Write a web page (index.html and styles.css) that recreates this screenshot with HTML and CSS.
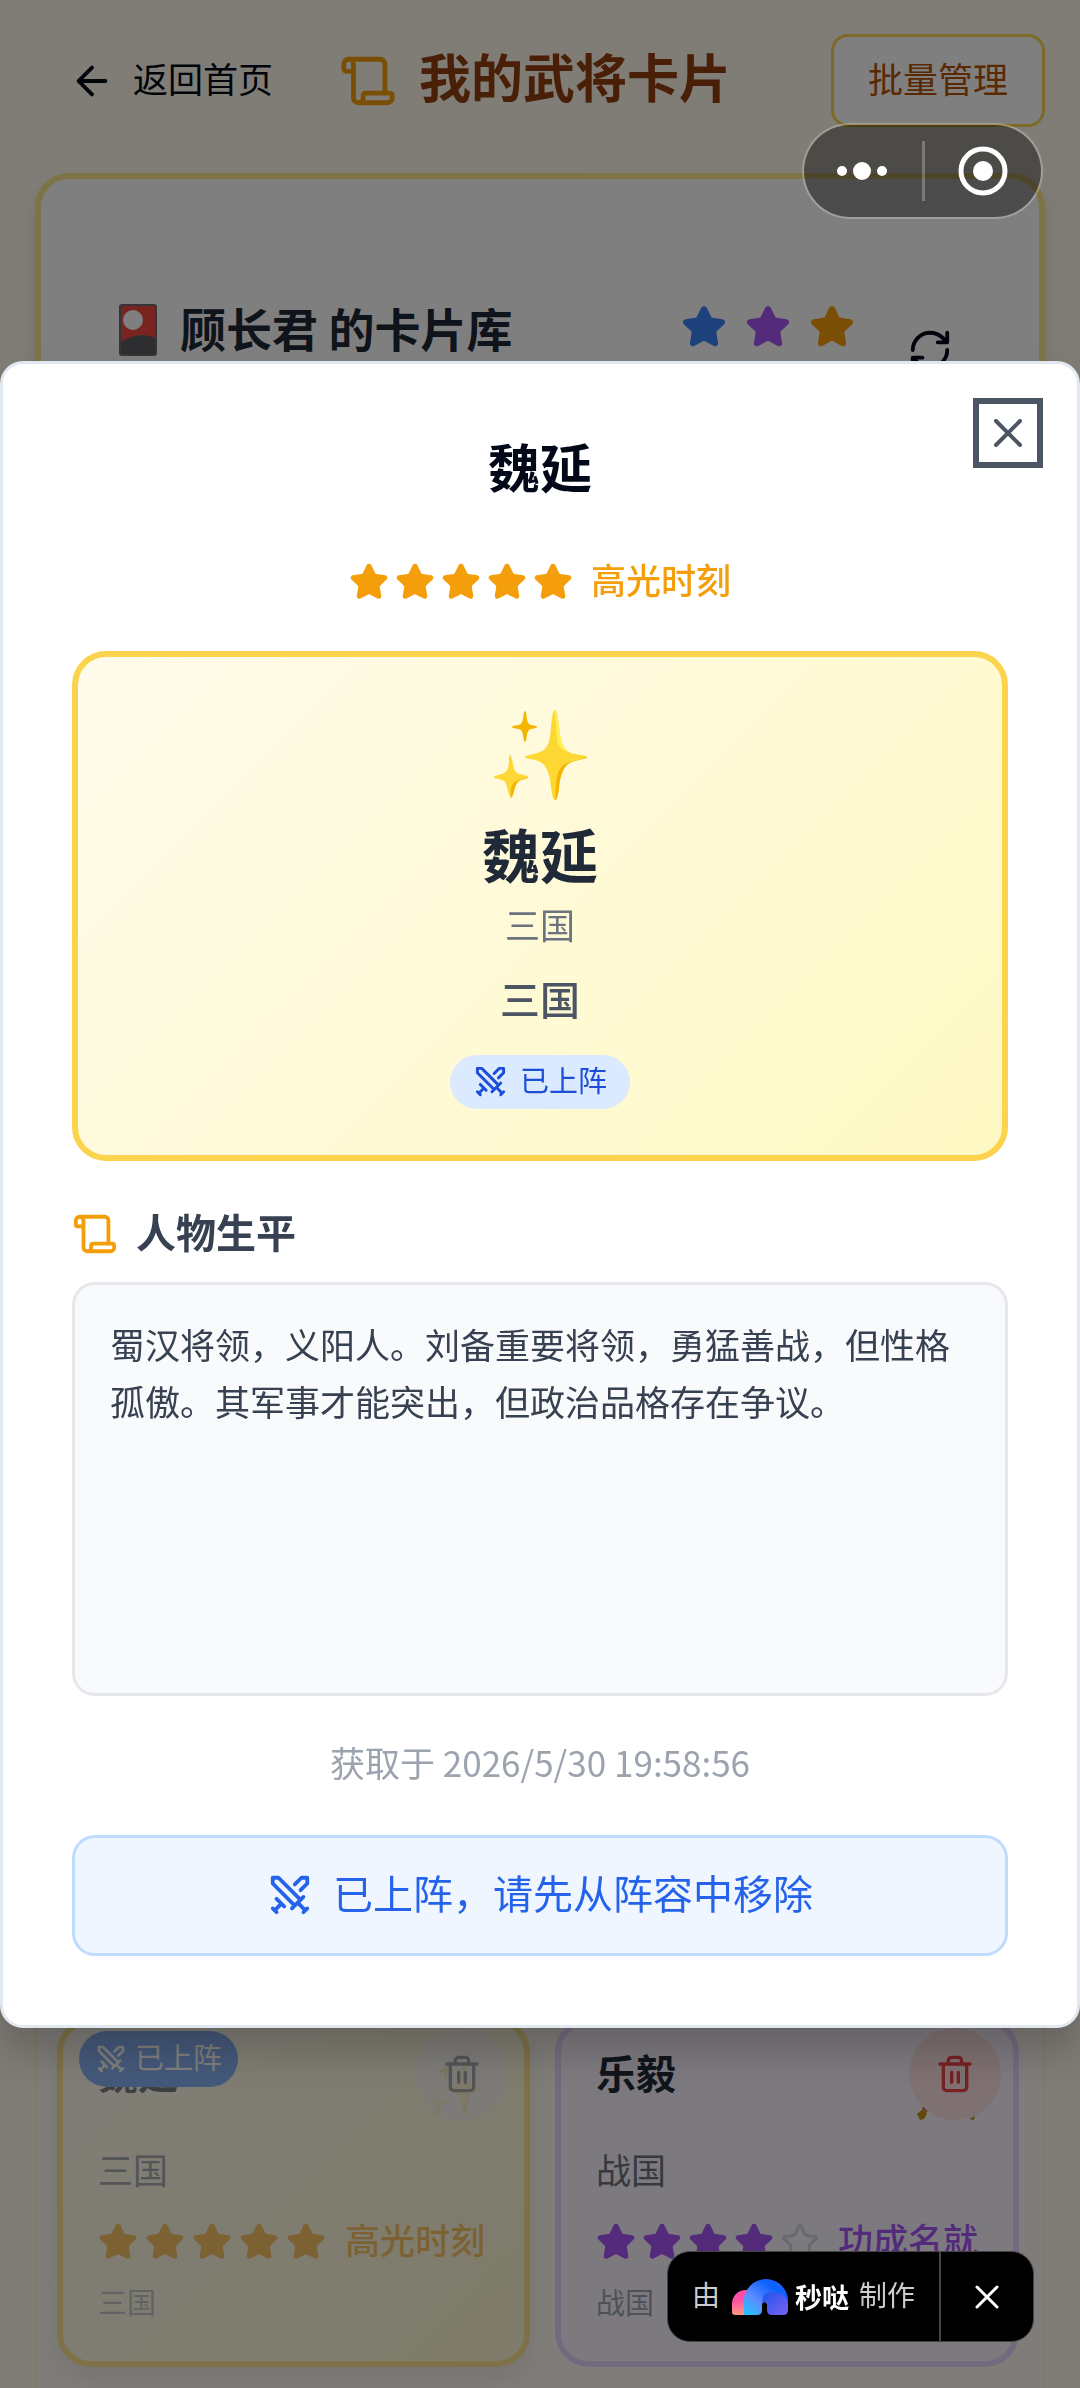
FILE: index.html
```html
<!DOCTYPE html>
<html lang="zh-CN">
<head>
<meta charset="utf-8">
<meta name="viewport" content="width=device-width, initial-scale=1">
<title>我的武将卡片</title>
<link rel="stylesheet" href="styles.css">
</head>
<body>
<svg class="defs" aria-hidden="true">
  <symbol id="star" viewBox="0 0 24 24"><path d="M11.525 2.295a.53.53 0 0 1 .95 0l2.31 4.679a2.123 2.123 0 0 0 1.595 1.16l5.166.756a.53.53 0 0 1 .294.904l-3.736 3.638a2.123 2.123 0 0 0-.611 1.878l.882 5.14a.53.53 0 0 1-.771.56l-4.618-2.428a2.122 2.122 0 0 0-1.973 0L6.396 21.01a.53.53 0 0 1-.77-.56l.881-5.139a2.122 2.122 0 0 0-.611-1.879L2.16 9.795a.53.53 0 0 1 .294-.906l5.165-.755a2.122 2.122 0 0 0 1.597-1.16z"/></symbol>
  <symbol id="swords" viewBox="0 0 24 24"><path d="M14.5 17.5 3 6V3h3l11.5 11.5M13 19l6-6M16 16l4 4M19 21l2-2M14.5 6.5 18 3h3v3l-3.5 3.5M5 14l4 4M7 17l-3 3M3 19l2 2"/></symbol>
  <symbol id="scroll" viewBox="0 0 24 24"><path d="M19 17V5a2 2 0 0 0-2-2H4"/><path d="M8 21h12a2 2 0 0 0 2-2v-1a1 1 0 0 0-1-1H11a1 1 0 0 0-1 1v1a2 2 0 1 1-4 0V5a2 2 0 1 0-4 0v2a1 1 0 0 0 1 1h3"/></symbol>
  <symbol id="trash" viewBox="0 0 24 24"><path d="M3 6h18M19 6v14a2 2 0 0 1-2 2H7a2 2 0 0 1-2-2V6M8 6V4a2 2 0 0 1 2-2h4a2 2 0 0 1 2 2v2M10 11v6M14 11v6"/></symbol>
  <symbol id="sparkles" viewBox="0 0 96 92">
    <path fill="#fdd835" d="M63 1c2 0 3 7 4 17 2 16 4 22 10 25 5 3 18 3 18 5s-13 3-19 7c-6 5-8 14-9 24-1 8-2 12-4 12s-3-5-4-13c-1-10-3-19-9-24-5-4-17-4-17-6s12-3 17-6c6-3 8-10 9-24 1-10 2-17 4-17z"/>
    <path fill="#ffee58" d="M63 1c2 0 3 7 4 17 2 16 4 22 10 25-6-1-11-4-12-12-1-9-1-20-2-30z"/>
    <path fill="#f4b400" d="M95 48c0 2-13 3-19 7-6 5-8 14-9 24-1 8-2 12-4 12 1-9 0-17 3-27 4-12 17-11 29-16z"/>
    <path fill="#fdd835" d="M18 46c1 0 2 4 3 9 1 6 2 8 6 10 3 1 9 1 9 3s-6 2-9 4c-5 3-5 15-8 17-3-1-3-14-7-17-3-2-10-2-10-4s7-2 10-4c4-2 4-6 5-10 0-5 0-8 1-8z"/>
    <path fill="#f4b400" d="M36 68c0 2-6 2-9 4-5 3-5 15-8 17 0-6-1-10 2-14 3-5 9-4 15-7z"/>
    <path fill="#f4b400" d="M33 2c2 0 1 11 4 13 2 2 8 1 8 3s-6 1-8 3c-3 3-2 12-4 12s-1-9-4-12c-2-2-9-1-9-3s7-1 9-3c3-3 2-13 4-13z"/>
  </symbol>
</svg>

<div class="page">
  <header class="topbar">
    <a class="back" href="#">
      <svg class="icon icon-md" viewBox="0 0 24 24"><path d="m12 19-7-7 7-7M19 12H5"/></svg>
      <span class="label">返回首页</span>
    </a>
    <h1 class="page-title"><svg class="icon icon-lg amber"><use href="#scroll"/></svg><span class="label">我的武将卡片</span></h1>
    <button class="manage" type="button"><span class="label">批量管理</span></button>
  </header>

  <section class="library">
    <h2 class="library-title">
      <svg class="flower-card" viewBox="0 0 38 52" aria-hidden="true">
        <rect width="38" height="52" rx="3" fill="#6b6b6e"/>
        <path d="M2 2h34v32c-11-5-23-3-34 4z" fill="#f4483f"/>
        <path d="M2 38c11-7 23-9 34-4v16H2z" fill="#5c5c60"/>
        <circle cx="14" cy="16" r="10" fill="#fff"/>
      </svg>
      <span class="label">顾长君 的卡片库</span>
    </h2>
    <div class="totals">
      <svg class="star icon-md blue"><use href="#star"/></svg>
      <svg class="star icon-md purple"><use href="#star"/></svg>
      <svg class="star icon-md amber"><use href="#star"/></svg>
    </div>
    <button class="refresh" type="button" aria-label="刷新">
      <svg class="icon icon-md" viewBox="0 0 24 24"><path d="M3 12a9 9 0 0 1 9-9 9.750 9.750 0 0 1 6.740 2.740L21 8M21 3v5h-5M21 12a9 9 0 0 1-9 9 9.750 9.750 0 0 1-6.740-2.740L3 16M8 16H3v5"/></svg>
    </button>
  </section>

  <section class="collection">
    <article class="card gold deployed">
      <h3>魏延</h3>
      <p class="era">三国</p>
      <div class="rating amber">
        <svg class="star"><use href="#star"/></svg><svg class="star"><use href="#star"/></svg><svg class="star"><use href="#star"/></svg><svg class="star"><use href="#star"/></svg><svg class="star"><use href="#star"/></svg>
        <span class="label">高光时刻</span>
      </div>
      <p class="faction">三国</p>
      <svg class="card-emoji"><use href="#sparkles"/></svg>
      <button class="delete" type="button" disabled aria-label="删除"><svg class="icon"><use href="#trash"/></svg></button>
      <span class="deployed-tag"><svg class="icon"><use href="#swords"/></svg><span class="label">已上阵</span></span>
    </article>
    <article class="card violet">
      <h3>乐毅</h3>
      <p class="era">战国</p>
      <div class="rating purple">
        <svg class="star"><use href="#star"/></svg><svg class="star"><use href="#star"/></svg><svg class="star"><use href="#star"/></svg><svg class="star"><use href="#star"/></svg><svg class="star empty"><use href="#star"/></svg>
        <span class="label">功成名就</span>
      </div>
      <p class="faction">战国</p>
      <svg class="card-emoji" viewBox="0 0 58 56"><path d="m0 50 6-5 4 4-3 6-4 1z" fill="#c89410"/><path d="m5 44 3-4 4 3-2 5z" fill="#a84b2a"/><path d="m52 55 6-3-1 4z" fill="#c89410"/></svg>
      <button class="delete" type="button" aria-label="删除"><svg class="icon"><use href="#trash"/></svg></button>
    </article>
  </section>
</div>

<div class="overlay">
  <div class="modal" role="dialog" aria-modal="true" aria-labelledby="modal-title">
    <button class="close" type="button" aria-label="关闭"><svg viewBox="0 0 28 28"><path d="m2 2 24 24M26 2 2 26"/></svg></button>
    <h2 class="modal-title" id="modal-title">魏延</h2>
    <div class="rating modal-rating amber">
      <svg class="star"><use href="#star"/></svg><svg class="star"><use href="#star"/></svg><svg class="star"><use href="#star"/></svg><svg class="star"><use href="#star"/></svg><svg class="star"><use href="#star"/></svg>
      <span class="label">高光时刻</span>
    </div>
    <div class="hero">
      <svg class="hero-emoji"><use href="#sparkles"/></svg>
      <h3 class="hero-name">魏延</h3>
      <p class="hero-era">三国</p>
      <p class="hero-faction">三国</p>
      <span class="badge"><svg class="icon"><use href="#swords"/></svg><span class="label">已上阵</span></span>
    </div>
    <h3 class="bio-title"><svg class="icon icon-md amber"><use href="#scroll"/></svg><span class="label">人物生平</span></h3>
    <p class="bio">蜀汉将领，义阳人。刘备重要将领，勇猛善战，但性格孤傲。其军事才能突出，但政治品格存在争议。</p>
    <p class="obtained">获取于 2026/5/30 19:58:56</p>
    <div class="notice"><svg class="icon icon-md"><use href="#swords"/></svg><span class="label">已上阵，请先从阵容中移除</span></div>
  </div>
</div>

<div class="capsule">
  <button class="more" type="button" aria-label="更多"><svg width="52" height="20" viewBox="0 0 52 20"><circle cx="6" cy="10" r="5"/><circle cx="26" cy="10" r="9"/><circle cx="46" cy="10" r="5"/></svg></button>
  <button class="exit" type="button" aria-label="退出"><svg width="50" height="50" viewBox="0 0 50 50"><circle cx="25" cy="25" r="22" fill="none" stroke="#fff" stroke-width="5"/><circle cx="25" cy="25" r="10"/></svg></button>
</div>

<div class="made-with">
  <a class="made-link" href="#"><span class="label">由</span>
    <svg class="brand" viewBox="0 0 56 36" aria-hidden="true">
      <defs>
        <linearGradient id="pink" x1="0" y1="0" x2="0" y2="1"><stop offset=".4" stop-color="#ff4fa8"/><stop offset="1" stop-color="#ff9a80"/></linearGradient>
        <linearGradient id="arch" x1="0" y1="1" x2="1" y2="0"><stop offset="0" stop-color="#22c8ff"/><stop offset=".35" stop-color="#5b8cff"/><stop offset=".7" stop-color="#0b62ff"/><stop offset="1" stop-color="#2a5cff"/></linearGradient>
        <linearGradient id="leg" x1="0" y1="0" x2="1" y2="1"><stop offset="0" stop-color="#1f54e8"/><stop offset="1" stop-color="#7a62f5"/></linearGradient>
      </defs>
      <path fill="url(#pink)" d="M0 33V25c0-8 6-14 14-14h4v25H3q-3 0-3-3z"/>
      <path fill="url(#arch)" d="M12 36V22a22 22 0 0 1 44 0v4H36l-3-3q-3 0-3 3v5q0 5-5 5z"/>
      <path fill="url(#leg)" d="M31 17q4-4 10-4c8 0 15 5 15 13v5q0 5-5 5H40q-5 0-5-5v-5q0-3-2-3-3 0-3 3z"/>
    </svg>
    <strong>秒哒</strong>
    <span class="label">制作</span>
  </a>
  <button class="made-close" type="button" aria-label="关闭"><svg width="24" height="24" viewBox="0 0 24 24"><path d="m2 2 20 20M22 2 2 22"/></svg></button>
</div>
</body>
</html>
```

FILE: styles.css
```css
* { box-sizing: border-box; }

body {
  margin: 0;
  overflow: hidden;
  font-family: "Noto Sans CJK SC", "Noto Sans", sans-serif;
  font-size: 35px;
  line-height: 48px;
  color: #020817;
}

h1, h2, h3, p { margin: 0; }
svg { display: block; flex: none; }
button { margin: 0; padding: 0; border: 0; background: none; font: inherit; color: inherit; }
a { color: inherit; text-decoration: none; }

.defs { position: absolute; width: 0; height: 0; }

.icon { fill: none; stroke: currentColor; stroke-width: 2; stroke-linecap: round; stroke-linejoin: round; }
.star { width: 40px; height: 40px; fill: currentColor; stroke: currentColor; stroke-width: 2; stroke-linejoin: round; }
.icon-md { width: 46px; height: 46px; }
.icon-lg { width: 58px; height: 58px; }
.amber { color: #f59e0b; }
.blue { color: #3b82f6; }
.purple { color: #a855f7; }

/* Lifts the low-sitting CJK glyphs to the middle of the icon beside them */
.label { display: block; padding-bottom: 6px; }

/* Page */
.page {
  display: flex;
  flex-direction: column;
  min-height: 100vh;
  padding: 34px 35px 0;
  background: linear-gradient(135deg, #fffbeb, #fff7ed);
}

.topbar { display: flex; align-items: center; margin-bottom: 46px; }
.back { display: flex; align-items: center; gap: 18px; padding-left: 34px; }
.page-title {
  display: flex;
  align-items: center;
  gap: 22px;
  margin-left: 66px;
  font-size: 52px;
  line-height: 70px;
  font-weight: 700;
  color: #92400e;
}
.page-title .label { padding-bottom: 10px; }
.page-title .icon { color: #f59e0b; }
.manage {
  height: 93px;
  margin-left: auto;
  padding: 0 34px;
  border: 3px solid #fcd34d;
  border-radius: 17px;
  background: #fff;
  color: #b45309;
}

.library {
  display: flex;
  align-items: flex-start;
  padding: 125px 86px 46px 78px;
  border: 6px solid #fde68a;
  border-radius: 34px;
  background: #fff;
  box-shadow: 0 12px 18px rgba(0, 0, 0, .1);
}
.library-title {
  display: flex;
  align-items: center;
  gap: 23px;
  font-size: 46px;
  line-height: 46px;
  font-weight: 700;
  color: #1f2937;
}
.flower-card { width: 38px; height: 52px; }
.totals { display: flex; gap: 18px; margin-left: auto; }
.refresh { height: 92px; margin-left: 52px; }

.collection {
  flex: 1;
  display: grid;
  grid-template-columns: 474fr 464fr;
  gap: 25px;
  align-items: end;
  margin-top: 69px;
  padding: 0 24px 21px 20px;
  border: 2px solid #fef3c7;
  border-bottom: 0;
  border-radius: 34px 34px 0 0;
  background: rgba(255, 255, 255, .3);
}
.card {
  position: relative;
  padding: 21px 35px 40px;
  border: 6px solid;
  border-radius: 34px;
}
.card.gold {
  border-color: #fcd34d;
  background: linear-gradient(135deg, #fffbeb, #fef9c3);
  box-shadow: 0 12px 18px rgba(0, 0, 0, .1);
}
.card.violet { border-color: #e9d5ff; background: #faf5ff; }
.card.deployed { opacity: .6; }
.card h3 { margin-bottom: 46px; font-size: 40px; line-height: 54px; font-weight: 700; color: #1f2937; }
.era { margin-bottom: 26px; color: #6b7280; }
.faction { margin-top: 16px; font-size: 29px; line-height: 40px; color: #9ca3af; }

.rating { display: flex; align-items: center; gap: 6px; height: 46px; font-weight: 500; white-space: nowrap; }
.rating .label { margin-left: 12px; }
.gold .rating { gap: 7px; }
.star.empty { fill: none; color: #d1d5db; }

.card-emoji { position: absolute; top: 36px; right: 40px; width: 58px; height: 56px; }
.violet .card-emoji { top: 40px; right: 38px; }
.delete {
  position: absolute;
  top: 4px;
  right: 12px;
  display: grid;
  place-items: center;
  width: 92px;
  height: 92px;
  border-radius: 50%;
  background: #fee2e2;
  color: #ef4444;
}
.delete:disabled { right: 16px; background: rgba(243, 244, 246, .7); color: #6b7280; }
.delete .icon { width: 40px; height: 40px; }
.deployed-tag {
  position: absolute;
  top: 7px;
  left: 16px;
  display: flex;
  align-items: center;
  gap: 8px;
  height: 56px;
  padding: 0 16px;
  border-radius: 28px;
  background: #3b82f6;
  color: #fff;
  font-size: 29px;
}
.deployed-tag .icon { width: 32px; height: 32px; }

/* Modal */
.overlay {
  position: fixed;
  inset: 0;
  display: flex;
  align-items: center;
  background: rgba(0, 0, 0, .5);
}
.modal {
  position: relative;
  width: 100%;
  padding: 67px 69px 69px;
  border: 3px solid #e2e8f0;
  border-radius: 23px;
  background: #fff;
  box-shadow: 0 24px 40px rgba(0, 0, 0, .2);
}
.close {
  position: absolute;
  top: 34px;
  right: 34px;
  display: grid;
  place-items: center;
  width: 70px;
  height: 70px;
  border: 6px solid #4b5563;
}
.close svg { width: 28px; height: 28px; fill: none; stroke: #4b5563; stroke-width: 4; stroke-linecap: round; }
.modal-title { margin-bottom: 58px; font-size: 52px; line-height: 70px; font-weight: 700; text-align: center; }
.modal-rating { justify-content: center; margin-bottom: 46px; }

.hero {
  display: flex;
  flex-direction: column;
  align-items: center;
  margin-bottom: 45px;
  padding: 52px 46px 46px;
  border: 6px solid #fcd34d;
  border-radius: 34px;
  background: linear-gradient(135deg, #fffbeb, #fef9c3);
}
.hero-emoji { width: 96px; height: 92px; margin-bottom: 17px; }
.hero-name { margin-bottom: 12px; font-size: 58px; line-height: 70px; font-weight: 700; color: #1f2937; }
.hero-era { margin-bottom: 24px; color: #6b7280; }
.hero-faction { margin-bottom: 31px; font-size: 40px; line-height: 52px; font-weight: 500; color: #4b5563; }
.badge {
  display: flex;
  align-items: center;
  gap: 12px;
  height: 54px;
  padding: 0 23px;
  border-radius: 27px;
  background: #dbeafe;
  color: #1d4ed8;
  font-size: 29px;
}
.badge .icon { width: 35px; height: 35px; }

.bio-title {
  display: flex;
  align-items: center;
  gap: 18px;
  height: 56px;
  margin-bottom: 20px;
  font-size: 40px;
  font-weight: 700;
  color: #374151;
}
.bio {
  min-height: 414px;
  margin-bottom: 42px;
  padding: 30px 35px;
  border: 3px solid #e5e7eb;
  border-radius: 23px;
  background: #f9fafb;
  line-height: 57px;
  color: #374151;
}
.obtained { margin-bottom: 49px; text-align: center; color: #9ca3af; }
.notice {
  display: flex;
  align-items: center;
  justify-content: center;
  gap: 20px;
  min-height: 121px;
  border: 3px solid #bfdbfe;
  border-radius: 23px;
  background: #eff6ff;
  font-size: 40px;
  color: #2563eb;
}

/* Host app controls */
.capsule {
  position: fixed;
  top: 123px;
  right: 37px;
  display: flex;
  width: 241px;
  height: 96px;
  border: 2px solid rgba(255, 255, 255, .25);
  border-radius: 48px;
  background: rgba(0, 0, 0, .4);
  background-clip: padding-box;
}
.capsule button { flex: 1; display: grid; place-items: center; }
.capsule svg { fill: #fff; }
.capsule .more { padding-right: 3px; }
.capsule .exit { position: relative; padding-left: 3px; }
.capsule .exit::before {
  content: "";
  position: absolute;
  left: -1px;
  top: 16px;
  width: 3px;
  height: 60px;
  background: rgba(255, 255, 255, .25);
}

.made-with {
  position: fixed;
  right: 46px;
  bottom: 46px;
  display: flex;
  height: 91px;
  border: 1px solid #444;
  border-radius: 23px;
  background: #000;
  font-size: 28px;
  color: #ccc;
}
.made-link { display: flex; align-items: center; padding: 0 24px; }
.made-link strong { margin: 0 10px 0 7px; font-size: 27px; font-weight: 700; color: #fff; }
.brand { width: 56px; height: 36px; margin-left: 12px; }
.made-close { display: grid; place-items: center; width: 94px; border-left: 2px solid #444; }
.made-close svg { stroke: #fff; stroke-width: 3; stroke-linecap: round; }
```
